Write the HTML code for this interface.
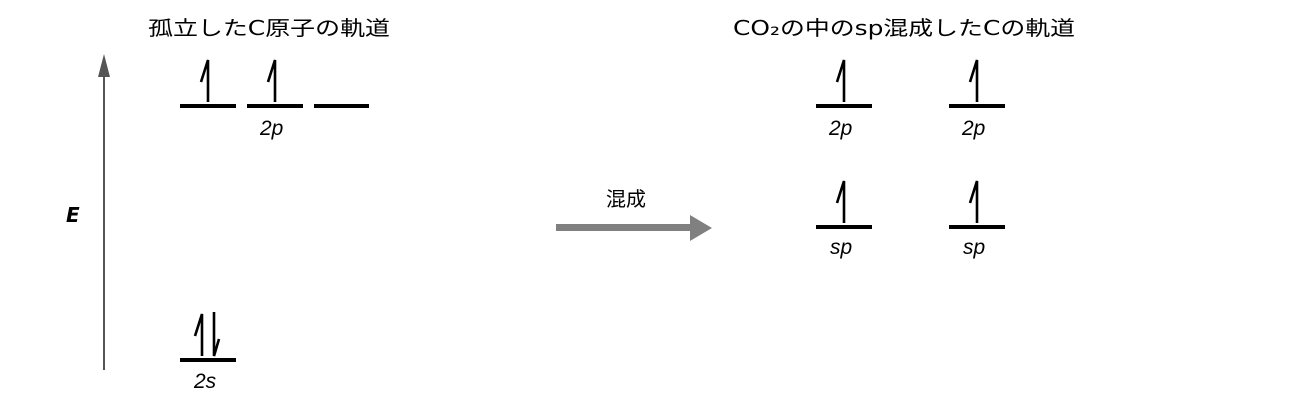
<!DOCTYPE html>
<html><head><meta charset="utf-8"><style>
html,body{margin:0;padding:0;background:#fff;width:1300px;height:402px;overflow:hidden}
svg text{font-family:"DejaVu Sans","WenQuanYi Zen Hei","Noto Sans CJK JP",sans-serif;fill:#000}
.l{font-family:"Liberation Sans",sans-serif;font-style:italic;font-size:21px}
</style></head><body>
<svg width="1300" height="402" xmlns="http://www.w3.org/2000/svg">
<defs>
<g id="up"><path d="M0 0 L0 -42 L-7 -20" fill="none" stroke="#000" stroke-width="2.6"/></g>
<g id="dn"><path d="M0 -44 L0 0 L5 -17" fill="none" stroke="#000" stroke-width="2.6"/></g>
</defs>
<text x="148" y="35" font-size="20" textLength="242" lengthAdjust="spacingAndGlyphs">孤立したC原子の軌道</text>
<text x="733" y="35" font-size="20" textLength="342" lengthAdjust="spacingAndGlyphs">CO₂の中のsp混成したCの軌道</text>
<line x1="104" y1="370" x2="104" y2="74" stroke="#555" stroke-width="2"/>
<polygon points="104,54 98,77 110,77" fill="#555"/>
<text x="66" y="222" font-family="Liberation Sans" font-weight="bold" font-style="italic" font-size="20">E</text>
<g fill="#000">
<rect x="180" y="104" width="56" height="4"/><rect x="247" y="104" width="56" height="4"/><rect x="314" y="104" width="55" height="4"/>
<rect x="180" y="358" width="56" height="4"/>
<rect x="816" y="104" width="56" height="4"/><rect x="949" y="104" width="56" height="4"/>
<rect x="816" y="225" width="56" height="4"/><rect x="949" y="225" width="56" height="4"/>
</g>
<use href="#up" x="208" y="102"/><use href="#up" x="275" y="102"/>
<use href="#up" x="202" y="356"/><use href="#dn" x="214" y="356"/>
<use href="#up" x="844" y="102"/><use href="#up" x="977" y="102"/>
<use href="#up" x="844" y="223"/><use href="#up" x="977" y="223"/>
<text class="l" x="260" y="135">2p</text>
<text class="l" x="194" y="388">2s</text>
<text class="l" x="829" y="135">2p</text>
<text class="l" x="962" y="135">2p</text>
<text class="l" x="830" y="254">sp</text>
<text class="l" x="963" y="254">sp</text>
<text x="606" y="206" font-size="20">混成</text>
<rect x="556" y="224" width="136" height="7" fill="#808080"/>
<polygon points="690,215 712,228 690,241" fill="#808080"/>
</svg>
</body></html>
